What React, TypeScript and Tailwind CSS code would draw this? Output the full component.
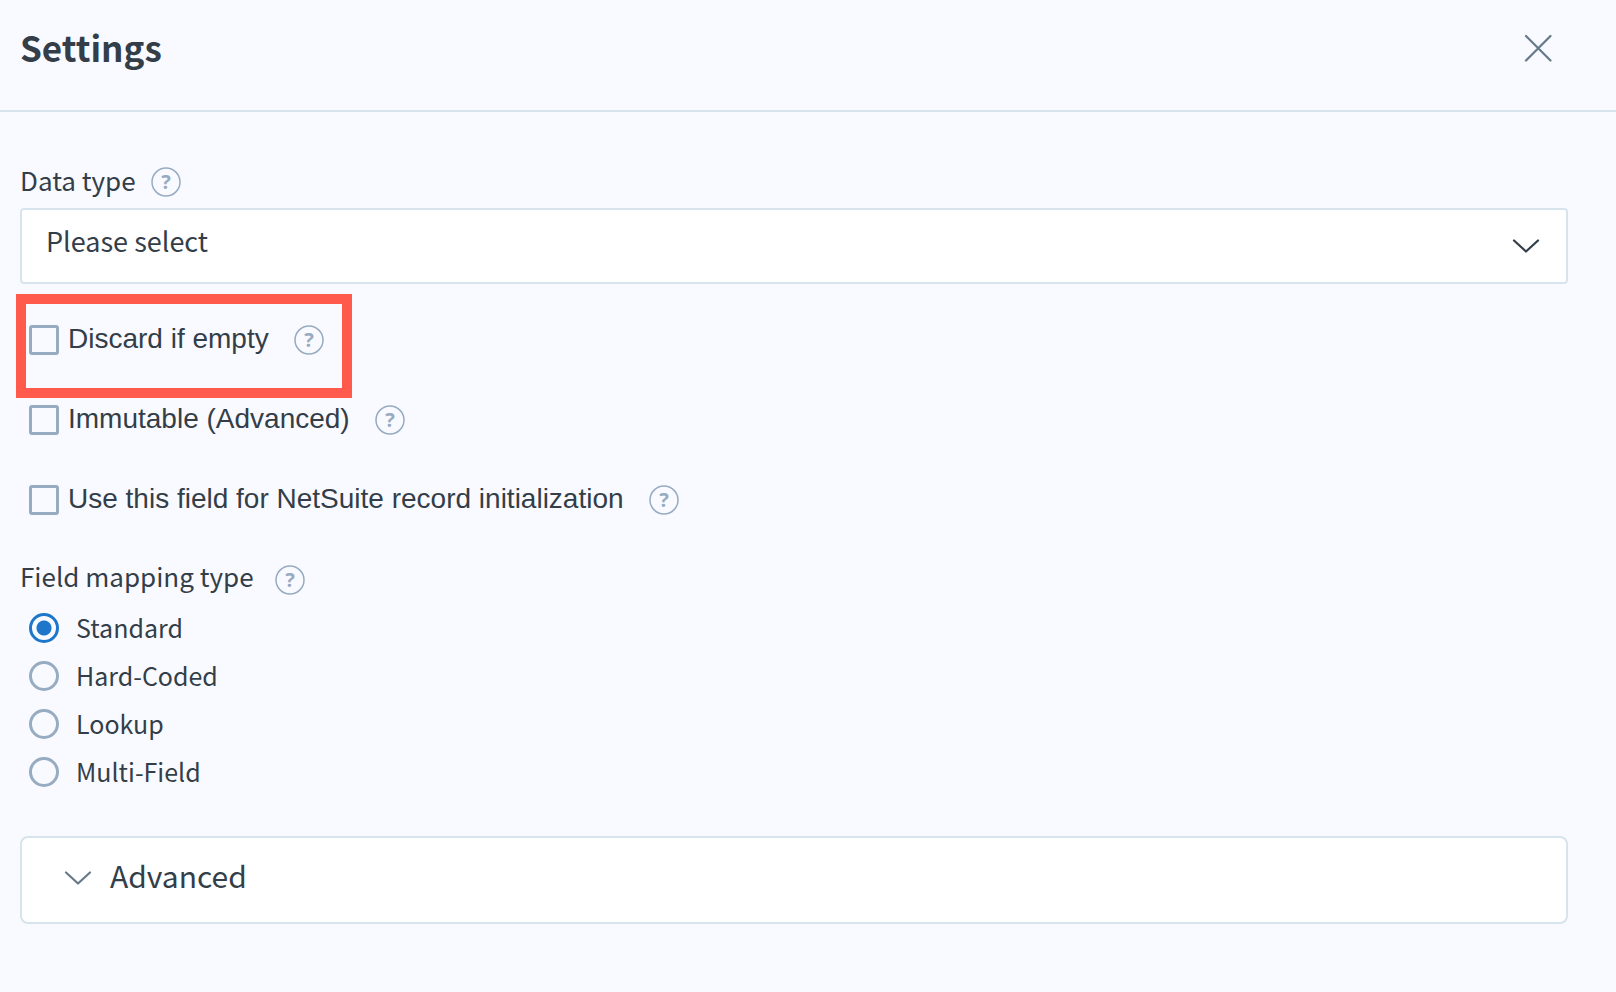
/**
 * Field mapping settings panel
 */
import { useState } from "react";

const checkboxes = [
  { id: "discard-if-empty", label: "Discard if empty", highlighted: true },
  { id: "immutable", label: "Immutable (Advanced)", highlighted: false },
  { id: "record-init", label: "Use this field for NetSuite record initialization", highlighted: false },
];

const mappingTypes = ["Standard", "Hard-Coded", "Lookup", "Multi-Field"];

function HelpButton({ topic }: { topic: string }) {
  return (
    <button type="button" aria-label={`Help: ${topic}`} className="shrink-0 text-[#97abc1]">
      <svg width="30" height="30" viewBox="0 0 30 30" className="block">
        <circle cx="15" cy="15" r="14" fill="none" stroke="currentColor" strokeWidth="1.5" />
        <text
          x="15"
          y="22"
          textAnchor="middle"
          fill="currentColor"
          className="font-['Noto_Sans'] text-[20px] font-bold"
        >
          ?
        </text>
      </svg>
    </button>
  );
}

function Chevron({ className }: { className: string }) {
  return (
    <svg width="28" height="16" viewBox="0 0 28 16" fill="none" className={className}>
      <path
        d="M2 2.5 14 13.5 26 2.5"
        stroke="currentColor"
        strokeWidth="2.25"
        strokeLinecap="round"
        strokeLinejoin="round"
      />
    </svg>
  );
}

export default function App() {
  const [checked, setChecked] = useState<Record<string, boolean>>({});
  const [mappingType, setMappingType] = useState("Standard");
  const [open, setOpen] = useState(false);

  return (
    <main className="min-h-screen bg-[#f9faff] font-['Noto_Sans_CJK_SC',sans-serif] text-[#333e49]">
      <header className="flex h-28 items-center justify-between border-b-2 border-[#d7e4ee] pb-3.5 pl-5 pr-[60px]">
        <h1 className="pb-0.5 text-[35px] leading-10 font-bold">Settings</h1>
        <button type="button" aria-label="Close" className="text-[#677a89]">
          <svg width="36" height="36" viewBox="0 0 36 36" fill="none" className="block">
            <path d="M6 6 30.5 30.5M30.5 6 6 30.5" stroke="currentColor" strokeWidth="2.25" strokeLinecap="round" />
          </svg>
        </button>
      </header>

      <form className="pl-5 pr-12 pt-[52px]">
        <div className="flex h-11 items-start gap-[15px]">
          <label htmlFor="data-type" className="text-[26px] leading-8">
            Data type
          </label>
          <div className="pt-[3px]">
            <HelpButton topic="Data type" />
          </div>
        </div>
        <div className="relative">
          <select
            id="data-type"
            className="h-[76px] w-full appearance-none rounded border-2 border-[#d7e4ee] bg-white pb-2.5 pl-6 pr-20 text-[27px]"
          >
            <option>Please select</option>
          </select>
          <Chevron className="pointer-events-none absolute right-7 top-[30px]" />
        </div>

        {checkboxes.map((box) => (
          <div key={box.id} className="relative flex h-20 items-center gap-[25px] pl-[9px] pt-8">
            {box.highlighted && (
              <div className="pointer-events-none absolute -left-1 top-[10px] h-[104px] w-84 border-10 border-[#ff5a4b]" />
            )}
            <div className="flex items-center gap-[9px]">
              <input
                id={box.id}
                type="checkbox"
                checked={!!checked[box.id]}
                onChange={(e) => setChecked({ ...checked, [box.id]: e.target.checked })}
                className="size-[30px] shrink-0 appearance-none rounded-[3px] border-3 border-[#97abc1] checked:bg-[#1d76c9]"
              />
              <label htmlFor={box.id} className="pb-0.5 font-['Liberation_Sans',sans-serif] text-[28px] leading-8">
                {box.label}
              </label>
            </div>
            <HelpButton topic={box.label} />
          </div>
        ))}

        <div role="radiogroup" aria-labelledby="mapping-type-label" className="pt-9">
          <div className="flex h-11 items-start gap-[21px]">
            <span id="mapping-type-label" className="text-[26px] leading-8">
              Field mapping type
            </span>
            <div className="pt-[5px]">
              <HelpButton topic="Field mapping type" />
            </div>
          </div>
          {mappingTypes.map((type) => (
            <label key={type} className="flex h-12 items-center gap-[17px] pl-[9px] text-[25px]">
              <input
                type="radio"
                name="mapping-type"
                checked={mappingType === type}
                onChange={() => setMappingType(type)}
                className="size-[30px] shrink-0 appearance-none rounded-full border-3 border-[#97abc1] checked:border-[#1d76c9] checked:bg-[radial-gradient(circle,#1d76c9_7px,transparent_8px)]"
              />
              <span>{type}</span>
            </label>
          ))}
        </div>

        <section className="mt-10 rounded-lg border-2 border-[#d7e4ee] bg-white">
          <button
            type="button"
            aria-expanded={open}
            onClick={() => setOpen(!open)}
            className="flex h-[84px] w-full items-center gap-[18px] pb-1 pl-[42px] text-[30px]"
          >
            <Chevron className="text-[#677a89]" />
            <span className="pb-1.5">Advanced</span>
          </button>
        </section>
      </form>
    </main>
  );
}
